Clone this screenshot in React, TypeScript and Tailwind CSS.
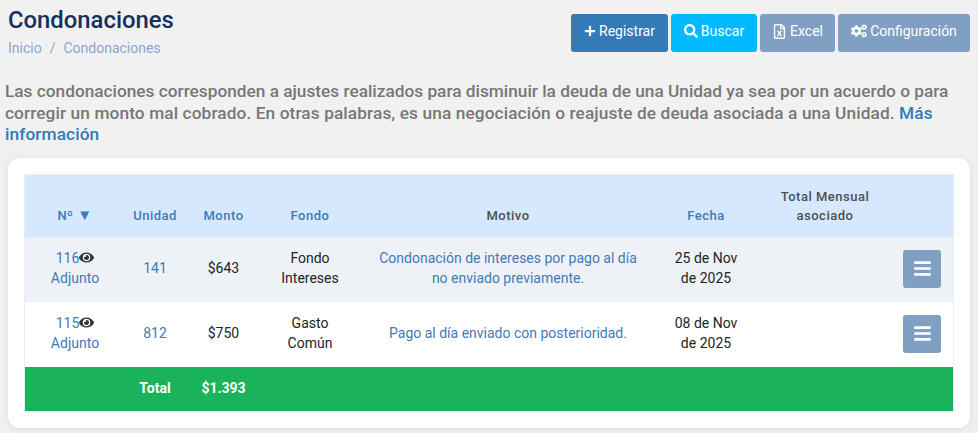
import React from "react";
import { FaPlus, FaSearch, FaRegFileExcel, FaCogs, FaEye, FaBars } from "react-icons/fa";

const font = { fontFamily: "Roboto, sans-serif" };

function Btn({ icon, label, cls }: { icon: React.ReactNode; label: string; cls: string }) {
  return (
    <button className={`h-[38px] pb-[4px] rounded-[3px] flex items-center justify-center gap-[3px] text-[14px] text-white ${cls}`}>
      {icon}
      <span>{label}</span>
    </button>
  );
}

function Row({ n, unidad, monto, f1, f2, motivo, d1, d2, bg }: { n: string; unidad: string; monto: string; f1: string; f2: string; motivo: [string, string?]; d1: string; d2: string; bg: string }) {
  return (
    <tr className={`h-[65px] text-[14px] leading-[20px] text-[#212529] text-center ${bg}`}>
      <td className="text-[#3f7ab8] pb-[3px]">
        <div className="flex items-center justify-center">{n}<FaEye className="text-[15px] text-[#333]" /></div>
        <div>Adjunto</div>
      </td>
      <td className="text-[#3f7ab8] pb-[3px]">{unidad}</td>
      <td className="pb-[3px]">{monto}</td>
      <td className="pb-[3px]"><div>{f1}</div><div>{f2}</div></td>
      <td className="text-[#3f7ab8] pb-[3px]"><div>{motivo[0]}</div>{motivo[1] && <div>{motivo[1]}</div>}</td>
      <td className="pb-[3px]"><div>{d1}</div><div>{d2}</div></td>
      <td></td>
      <td className="pr-3">
        <div className="flex justify-end pb-[1px]">
          <button className="w-[38px] h-[38px] rounded-[3px] bg-[#7f9fc3] flex items-center justify-center text-white">
            <FaBars className="text-[19px]" />
          </button>
        </div>
      </td>
    </tr>
  );
}

export default function App() {
  return (
    <div style={font} className="w-[978px] h-[433px] overflow-hidden bg-[#f1f1f1] flex flex-col">
      <div className="flex justify-between pl-2 pr-2 pt-[5px]">
        <div>
          <h1 className="text-[23.85px] leading-[30px] font-medium text-[#14305c]">Condonaciones</h1>
          <div className="mt-[3px] flex gap-2 text-[14px] leading-[20px] text-[#8aa6cf]">
            <span>Inicio</span><span>/</span><span>Condonaciones</span>
          </div>
        </div>
        <div className="flex gap-[3px] pt-[9px]">
          <Btn cls="w-[97px] bg-[#337ab7]" icon={<FaPlus className="text-[12px]" />} label="Registrar" />
          <Btn cls="w-[86px] bg-[#00b9ff]" icon={<FaSearch className="text-[14px]" />} label="Buscar" />
          <Btn cls="w-[75px] bg-[#7f9fc3]" icon={<FaRegFileExcel className="text-[15px]" />} label="Excel" />
          <Btn cls="w-[132px] bg-[#7f9fc3]" icon={<FaCogs className="text-[16px]" />} label="Configuración" />
        </div>
      </div>
      <p className="mt-[23px] mx-[5px] text-[17.25px] leading-[21.5px] font-medium text-[#777]">
        Las condonaciones corresponden a ajustes realizados para disminuir la deuda de una Unidad ya sea por un acuerdo o para{" "}
        <span className="tracking-[0.11px]">corregir un monto mal cobrado. En otras palabras, es una negociación o reajuste de deuda asociada a una Unidad. <span className="text-[#337ab7]">Más información</span></span>
      </p>
      <div className="mt-[12px] mx-2 h-[270px] shrink-0 rounded-[12px] bg-white p-4 shadow-[0_1px_8px_rgba(0,0,0,0.09)]">
        <div className="border border-[#e6eefa]">
          <table className="w-full border-collapse table-fixed">
            <colgroup>
              <col className="w-[100px]" /><col className="w-[60px]" /><col className="w-[77px]" /><col className="w-[96px]" />
              <col className="w-[300px]" /><col className="w-[96px]" /><col className="w-[142px]" /><col />
            </colgroup>
            <thead>
              <tr className="h-[62px] bg-[#d6e8fd] text-[13px] leading-[19px] font-medium tracking-[0.5px] text-center text-[#3f7ab8]">
                <th className="font-medium align-bottom pb-[12px]">Nº <span className="text-[15px]">▼</span></th>
                <th className="font-medium align-bottom pb-[12px]">Unidad</th>
                <th className="font-medium align-bottom pb-[12px]">Monto</th>
                <th className="font-medium align-bottom pb-[12px]">Fondo</th>
                <th className="font-medium align-bottom pb-[12px] text-[#495057]">Motivo</th>
                <th className="font-medium align-bottom pb-[12px]">Fecha</th>
                <th className="font-medium align-bottom pb-[12px] text-[#495057]">Total Mensual<br />asociado</th>
                <th></th>
              </tr>
            </thead>
            <tbody>
              <Row bg="bg-[#eef2f7]" n="116" unidad="141" monto="$643" f1="Fondo" f2="Intereses" motivo={["Condonación de intereses por pago al día", "no enviado previamente."]} d1="25 de Nov" d2="de 2025" />
              <Row bg="bg-white" n="115" unidad="812" monto="$750" f1="Gasto" f2="Común" motivo={["Pago al día enviado con posterioridad."]} d1="08 de Nov" d2="de 2025" />
              <tr className="h-[44px] bg-[#1ab25b] text-white text-[14px] font-bold text-center">
                <td></td><td>Total</td><td>$1.393</td><td></td><td></td><td></td><td></td><td></td>
              </tr>
            </tbody>
          </table>
        </div>
      </div>
    </div>
  );
}
